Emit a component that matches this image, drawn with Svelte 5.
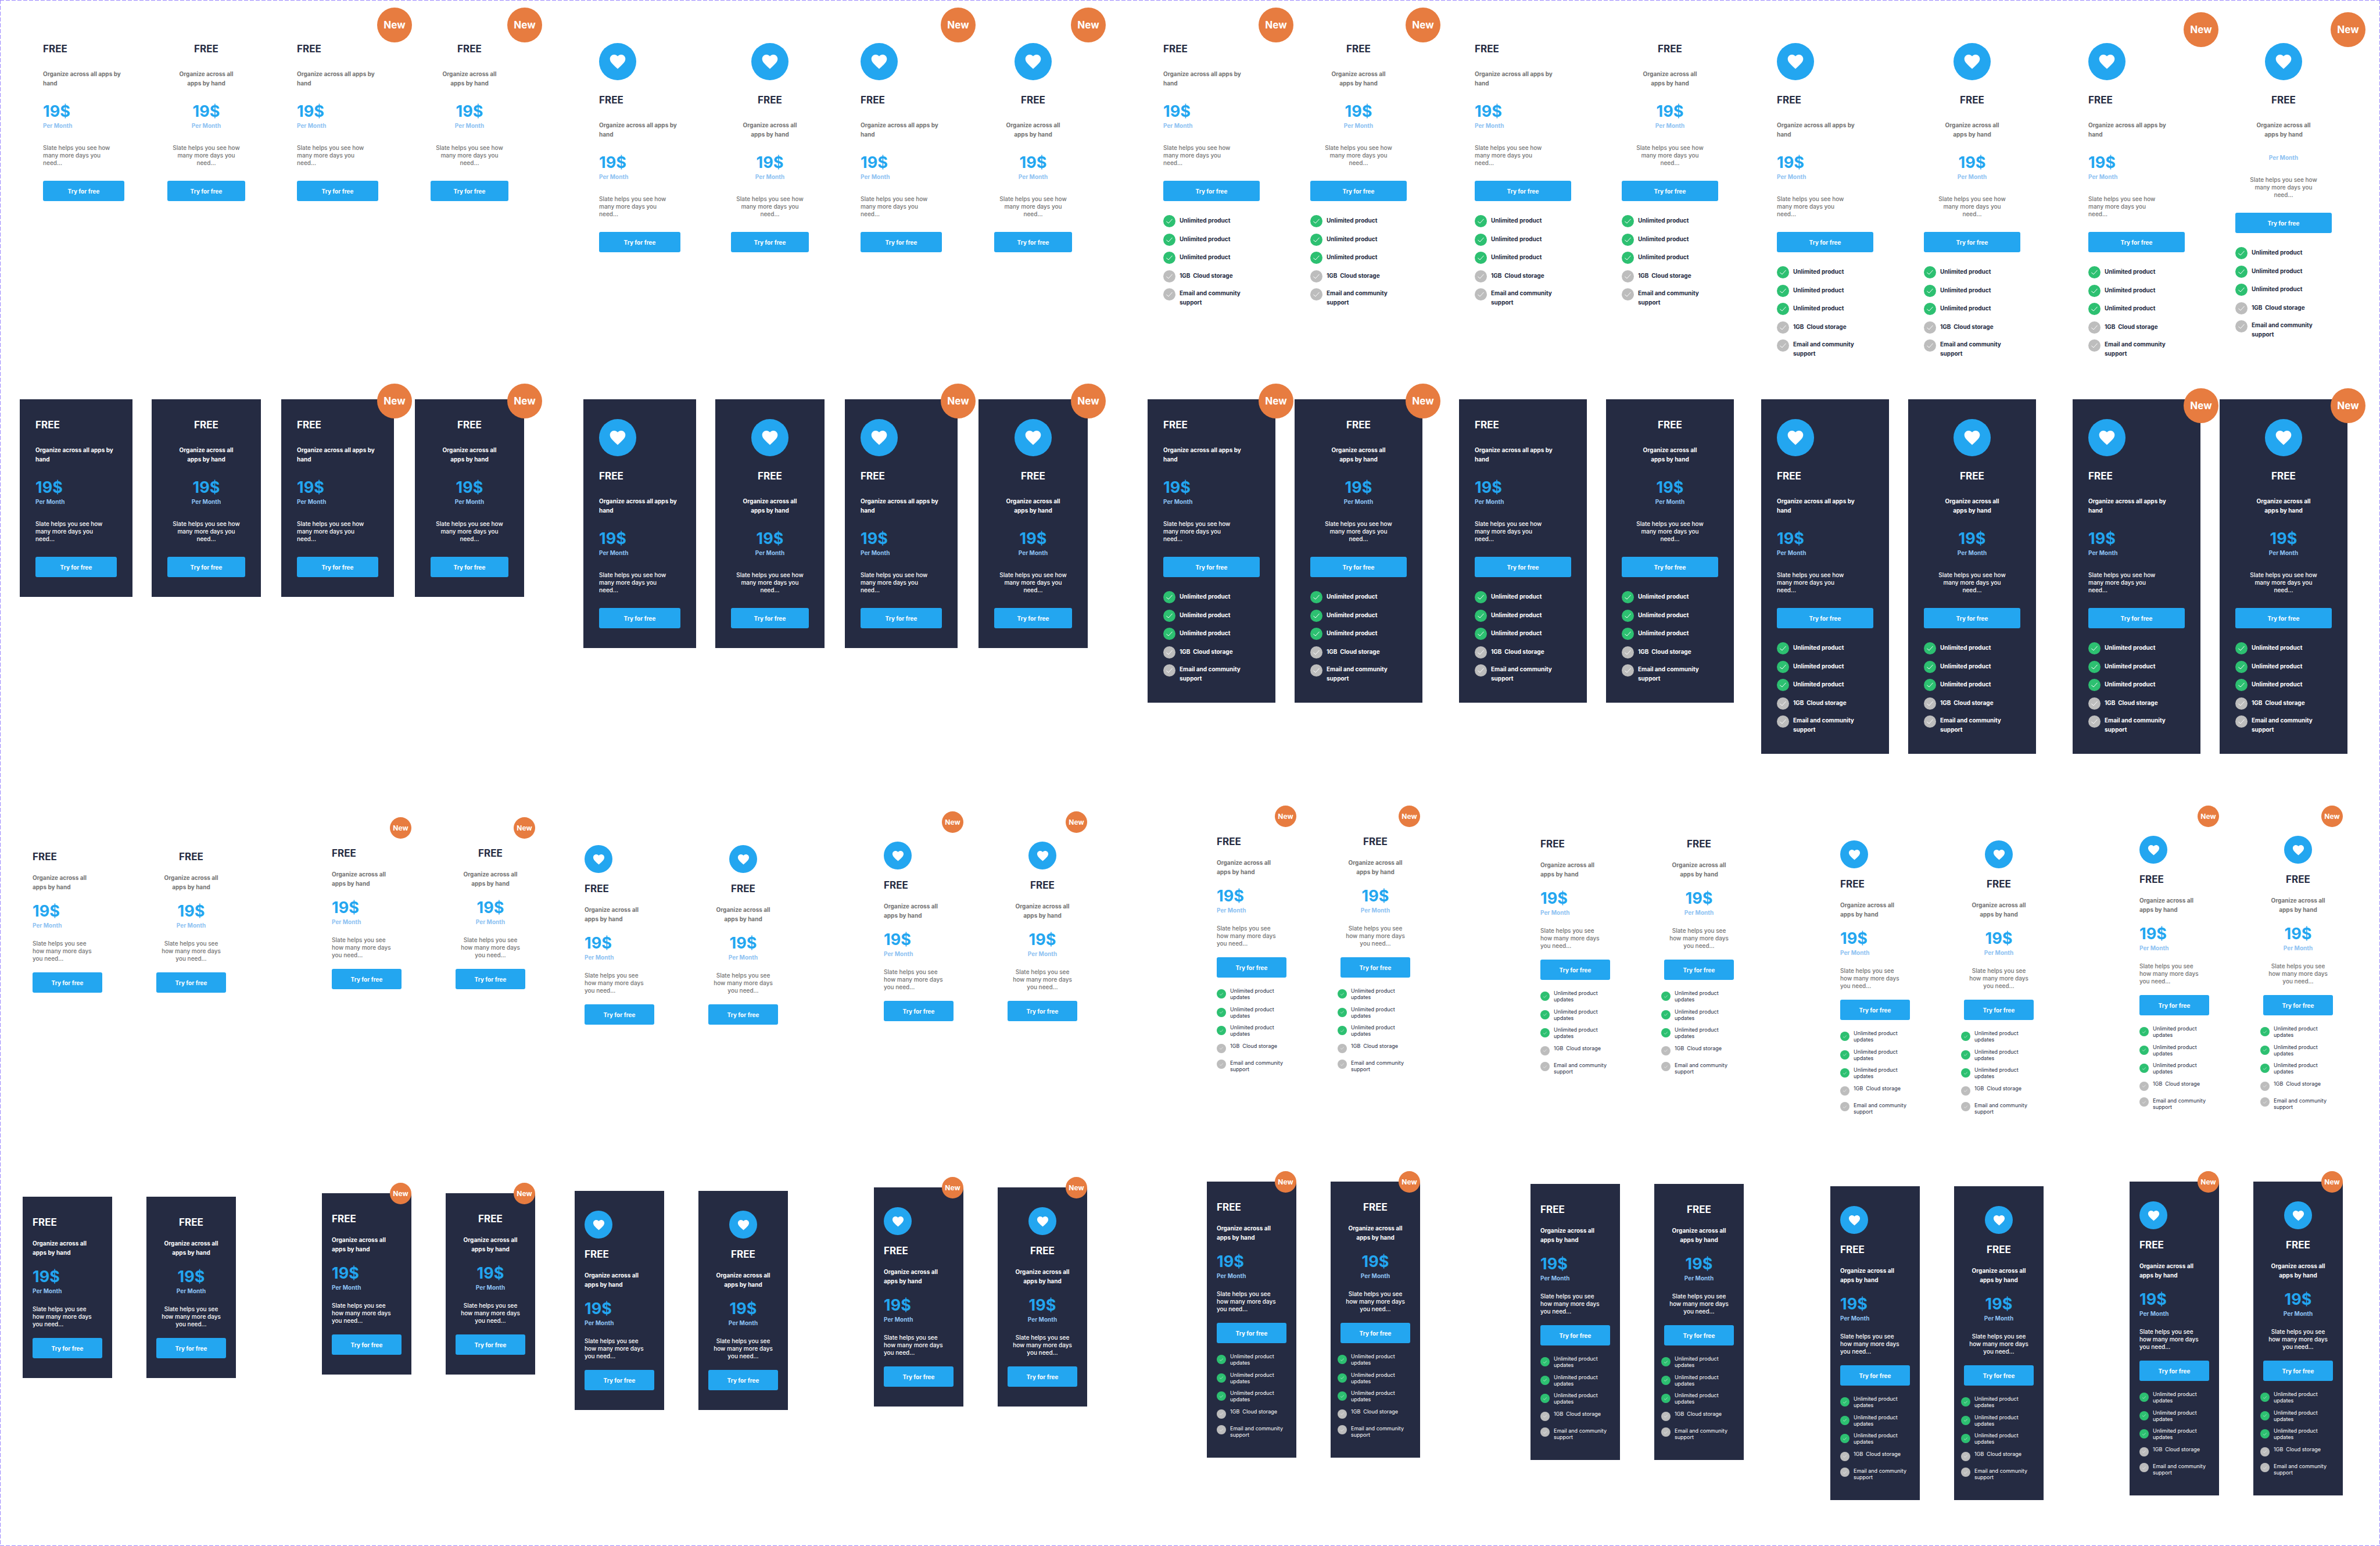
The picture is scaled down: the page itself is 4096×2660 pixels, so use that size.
<script>
  const features = {
    wide: [
      { text: 'Unlimited product', on: true },
      { text: 'Unlimited product', on: true },
      { text: 'Unlimited product', on: true },
      { text: '1GB  Cloud storage', on: false },
      { text: 'Email and community\nsupport', on: false }
    ],
    compact: [
      { text: 'Unlimited product\nupdates', on: true },
      { text: 'Unlimited product\nupdates', on: true },
      { text: 'Unlimited product\nupdates', on: true },
      { text: '1GB  Cloud storage', on: false },
      { text: 'Email and community\nsupport', on: false }
    ]
  };

  // Every group holds two pairs: left-aligned + centred, with or without the badge.
  const groups = [
    { icon: false, list: false, badges: [false, true] },
    { icon: true, list: false, badges: [false, true] },
    { icon: false, list: true, badges: [true, false] },
    { icon: true, list: true, badges: [false, true] }
  ];

  const rows = [
    { size: 'wide', theme: 'light' },
    { size: 'wide', theme: 'dark' },
    { size: 'compact', theme: 'light' },
    { size: 'compact', theme: 'dark' }
  ];

  const copy = {
    wide: {
      left: 'Organize across all apps by\nhand',
      center: 'Organize across all\napps by hand',
      note: 'Slate helps you see how\nmany more days you\nneed...'
    },
    compact: {
      left: 'Organize across all\napps by hand',
      center: 'Organize across all\napps by hand',
      note: 'Slate helps you see\nhow many more days\nyou need...'
    }
  };

  const hasAmount = (r, g, p, align) => !(r === 0 && g === 3 && p === 1 && align === 'center');
</script>

<main>
  {#each rows as row, r}
    <section class="row {row.size} {row.theme}">
      {#each groups as group, g}
        <div class="group" class:listed={group.list}>
          {#each group.badges as badge, p}
            <div class="pair">
              {#each ['left', 'center'] as align}
                <article class="card {align}">
                  {#if badge}
                    <span class="badge" class:low={group.icon && group.list}>New</span>
                  {/if}
                  {#if group.icon}
                    <span class="icon">
                      <svg viewBox="0 0 24 24" aria-hidden="true">
                        <path d="M12 21.35l-1.45-1.32C5.4 15.36 2 12.28 2 8.5 2 5.42 4.42 3 7.5 3c1.74 0 3.41.81 4.5 2.09C13.09 3.81 14.76 3 16.5 3 19.58 3 22 5.42 22 8.5c0 3.78-3.4 6.86-8.55 11.54L12 21.35z" />
                      </svg>
                    </span>
                  {/if}
                  <h3>FREE</h3>
                  <p class="lead">{copy[row.size][align]}</p>
                  <div class="price">
                    {#if hasAmount(r, g, p, align)}
                      <strong>19$</strong>
                    {/if}
                    <span>Per Month</span>
                  </div>
                  <p class="note">{copy[row.size].note}</p>
                  <button type="button">Try for free</button>
                  {#if group.list}
                    <ul>
                      {#each features[row.size] as item}
                        <li>
                          <span class="tick" class:on={item.on}>
                            <svg viewBox="0 0 17 13" aria-hidden="true">
                              <path d="M1 7.6 6.3 11.8 16 1.2" />
                            </svg>
                          </span>
                          <span class="label">{item.text}</span>
                        </li>
                      {/each}
                    </ul>
                  {/if}
                </article>
              {/each}
            </div>
          {/each}
        </div>
      {/each}
    </section>
  {/each}
</main>

<style>
  :global(body) {
    margin: 0;
    background: #fff;
  }

  main {
    --edge: #9a86ff;
    box-sizing: border-box;
    min-height: 100vh;
    padding-top: 40px;
    display: grid;
    grid-template-rows: 647fr 717fr 629fr 627fr;
    font-family: Inter, 'Open Sans', sans-serif;
    background:
      repeating-linear-gradient(90deg, var(--edge) 0 7px, transparent 7px 10px) top / 100% 1px no-repeat,
      repeating-linear-gradient(90deg, var(--edge) 0 7px, transparent 7px 10px) bottom / 100% 1px no-repeat,
      repeating-linear-gradient(180deg, var(--edge) 0 7px, transparent 7px 10px) left / 1px 100% no-repeat,
      repeating-linear-gradient(180deg, var(--edge) 0 7px, transparent 7px 10px) right / 1px 100% no-repeat,
      #fff;
  }

  .row {
    display: grid;
    align-items: start;
    --lead: #737373;
    --title: #252b42;
    --surface: transparent;
  }

  .dark {
    --lead: #fff;
    --title: #fff;
    --surface: #252b42;
  }

  .wide {
    padding: 0 56px 0 34px;
    grid-template-columns: minmax(0, 970fr) minmax(0, 971fr) minmax(0, 1056fr) minmax(0, 1009fr);
  }

  .compact {
    padding: 0 64px 0 39px;
    grid-template-columns: minmax(0, 950fr) minmax(0, 1088fr) minmax(0, 1073fr) minmax(0, 882fr);
  }

  .group,
  .pair {
    display: flex;
    align-items: flex-start;
  }

  .wide .group { gap: 35px; }
  .wide .group.listed { gap: 63px; }
  .wide .pair { gap: 33px; }
  .wide .group:not(.listed) .pair:last-child { gap: 36px; }

  .wide.light .group:first-child .pair:first-child {
    padding-left: 13px;
    gap: 20px;
  }

  .compact .group { gap: 148px; }
  .compact .group:nth-child(3) { gap: 190px; }
  .compact .pair { gap: 59px; }

  .compact .group:nth-child(1) .pair { margin-top: 20px; }
  .compact .group:nth-child(1) .pair:first-child { margin-top: 26px; }
  .compact .group:nth-child(2) .pair { margin-top: 10px; }
  .compact .group:nth-child(2) .pair:first-child { margin-top: 16px; }
  .compact .group:nth-child(3) .pair:last-child { margin-top: 4px; }
  .compact .group:nth-child(4) .pair:first-child { margin-top: 8px; }

  .card {
    position: relative;
    box-sizing: border-box;
    display: flex;
    flex-direction: column;
    background: var(--surface);
  }

  .wide .card {
    width: 194px;
    padding: 34px 27px;
    gap: 24px;
  }

  .wide .card.center { width: 188px; }
  .wide .listed .card,
  .wide .listed .card.center { width: 220px; }

  .compact .card {
    width: 154px;
    padding: 34px 17px;
    gap: 17px;
  }

  .center { text-align: center; }

  .badge {
    position: absolute;
    display: grid;
    place-items: center;
    border-radius: 50%;
    background: #e77c40;
    color: #fff;
    font-weight: 700;
    z-index: 1;
  }

  .wide .badge {
    top: -27px;
    right: -31px;
    width: 60px;
    height: 60px;
    font-size: 17px;
  }

  .wide .badge.low { top: -19px; }

  .compact .badge {
    top: -18px;
    right: 0;
    width: 37px;
    height: 37px;
    font-size: 12px;
  }

  .icon {
    display: grid;
    place-items: center;
    width: 64px;
    height: 64px;
    border-radius: 50%;
    background: #23a6f0;
  }

  .center .icon { align-self: center; }

  .icon svg {
    width: 32px;
    height: 32px;
    fill: #fff;
  }

  .compact .icon {
    width: 48px;
    height: 48px;
  }

  .compact .icon svg {
    width: 23px;
    height: 23px;
  }

  h3,
  p,
  ul {
    margin: 0;
    padding: 0;
  }

  h3 {
    font-size: 17px;
    line-height: 21px;
    font-weight: 700;
    color: var(--title);
  }

  .lead,
  .note {
    color: var(--lead);
    white-space: pre;
    font-size: 10px;
  }

  .center .lead,
  .center .note {
    align-self: center;
  }

  .lead {
    line-height: 16px;
    font-weight: 700;
  }

  .note {
    line-height: 13px;
    font-weight: 500;
  }

  .price {
    display: flex;
    flex-direction: column;
  }

  .price strong {
    font-size: 27px;
    line-height: 33px;
    font-weight: 700;
    color: #23a6f0;
  }

  .price span {
    font-size: 10px;
    line-height: 16px;
    font-weight: 700;
    color: #8ec2f2;
  }

  button {
    height: 35px;
    padding: 0;
    border: 0;
    border-radius: 3px;
    background: #23a6f0;
    color: #fff;
    font-family: inherit;
    font-size: 10px;
    font-weight: 700;
    cursor: pointer;
  }

  ul {
    list-style: none;
    display: flex;
    flex-direction: column;
    justify-content: space-between;
    text-align: left;
  }

  .wide ul { min-height: 158px; }

  .compact ul { min-height: 146px; }
  .compact .center ul { margin: 0 -5px; }

  li {
    display: flex;
    align-items: flex-start;
    gap: 7px;
  }

  .tick {
    flex: none;
    display: grid;
    place-items: center;
    width: 21px;
    height: 21px;
    border-radius: 50%;
    background: #bdbdbd;
  }

  .tick.on { background: #2dc071; }

  .tick svg {
    width: 11px;
    height: 9px;
    fill: none;
    stroke: #fff;
    stroke-width: 1.5;
    stroke-linecap: round;
    stroke-linejoin: round;
  }

  .label {
    color: var(--title);
    white-space: pre;
    font-size: 10px;
    line-height: 19px;
    font-weight: 700;
  }

  .wide li:last-child .label { line-height: 16px; }

  .compact .tick {
    width: 16px;
    height: 16px;
  }

  .compact .tick svg {
    width: 6px;
    height: 5px;
  }

  .compact li { align-items: center; }

  .compact li:nth-child(4) { min-height: 20px; }
  .compact li:nth-child(4) .label { align-self: flex-start; }
  .compact li:last-child { align-items: flex-start; }

  .compact .label {
    font-size: 9px;
    line-height: 11px;
    font-weight: 400;
  }
</style>
